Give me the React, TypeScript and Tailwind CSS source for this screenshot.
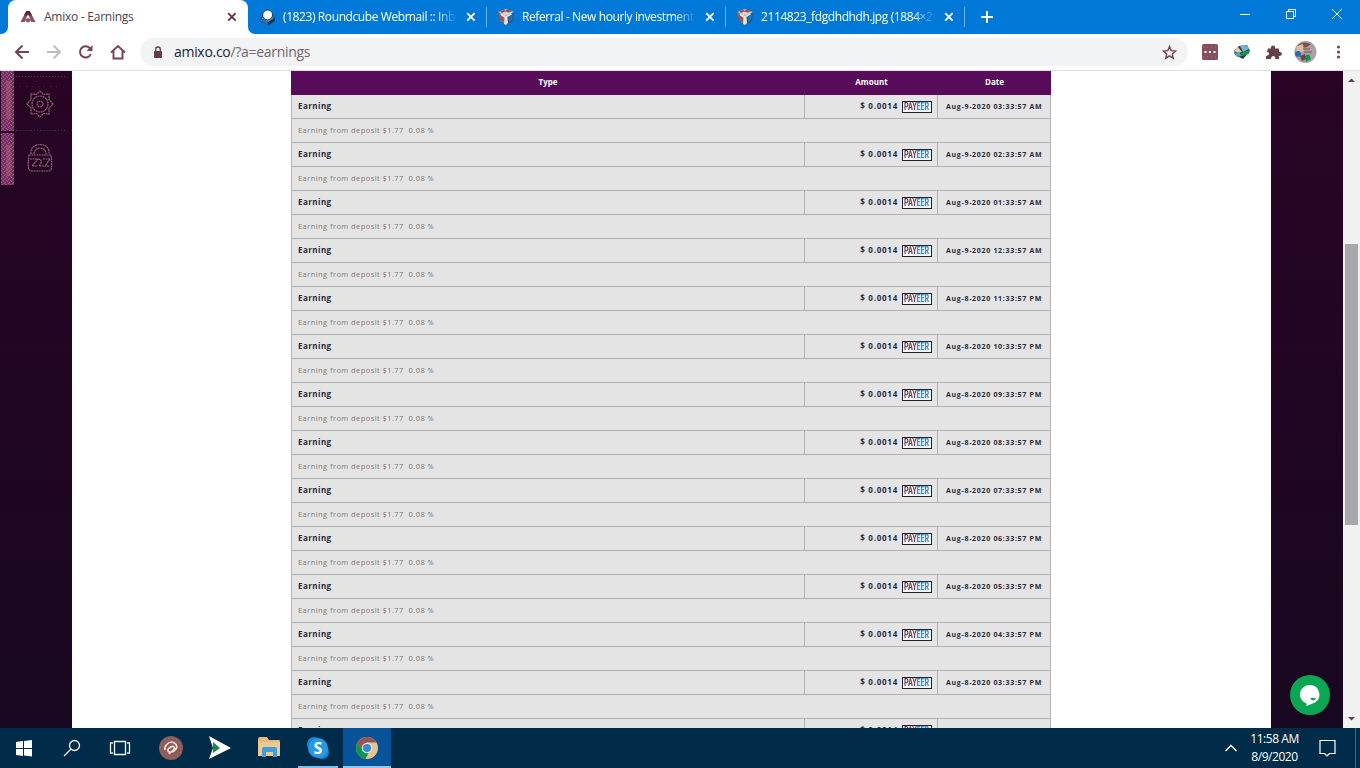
import { ReactNode } from "react";

const earnings = [
  "Aug-9-2020 03:33:57 AM",
  "Aug-9-2020 02:33:57 AM",
  "Aug-9-2020 01:33:57 AM",
  "Aug-9-2020 12:33:57 AM",
  "Aug-8-2020 11:33:57 PM",
  "Aug-8-2020 10:33:57 PM",
  "Aug-8-2020 09:33:57 PM",
  "Aug-8-2020 08:33:57 PM",
  "Aug-8-2020 07:33:57 PM",
  "Aug-8-2020 06:33:57 PM",
  "Aug-8-2020 05:33:57 PM",
  "Aug-8-2020 04:33:57 PM",
  "Aug-8-2020 03:33:57 PM",
  "Aug-8-2020 02:33:57 PM",
];

function CubeIcon() {
  return (
    <svg width="18" height="18" viewBox="0 0 18 18" className="shrink-0">
      <path d="M1 4 9 1l8 3-1 9-7 4-6-4z" fill="#27557f" />
      <path d="M1 4 9 1l8 3-8 4z" fill="#c9d3da" />
      <path d="M3 3.600 7 2l2 1-4 2zM10 1.500l5 1.700-3 1.400-4-1z" fill="#a5493e" />
      <path d="m1 4 8 4v9l-6-4z" fill="#75738a" />
      <path d="m2 6 5 3-1 4-3-1z" fill="#a84d42" />
      <path d="m4 5 5 3 5-3 1 1.500-4.500 2.500.5 6-2 2-2-1 .5-6-4-3z" fill="#e9dfd9" />
      <path d="m12 9 4-3-1 6-3 2z" fill="#1978bd" />
    </svg>
  );
}

function CloseIcon({ color }: { color: string }) {
  return (
    <svg width="10" height="10" viewBox="0 0 10 10" className="shrink-0">
      <path d="m1.2 1.2 7.4 7.4m0-7.4L1.2 8.6" stroke={color} strokeWidth="1.8" />
    </svg>
  );
}

function Tab({ icon, title, size }: { icon: ReactNode; title: string; size: string }) {
  return (
    <div className={`flex h-[34px] shrink-0 items-center text-white ${size}`}>
      {icon}
      <span className="ml-[7px] w-[174px] overflow-hidden whitespace-nowrap text-[12px] tracking-[-0.4px] [mask-image:linear-gradient(to_right,#000_88%,transparent)]">
        {title}
      </span>
      <span className="ml-auto mr-[10px]">
        <CloseIcon color="#fff" />
      </span>
      <span className="h-5 w-px bg-[#6bb4ee]" />
    </div>
  );
}

function TabStrip() {
  return (
    <div className="flex h-[34px] bg-[#0078d7]">
      <div className="flex w-2 bg-white">
        <div className="h-[34px] w-2 rounded-br-[7px] bg-[#0078d7]" />
      </div>
      <div className="flex w-[240px] items-center rounded-t-[8px] bg-white pl-3">
        <svg width="16" height="14" viewBox="0 0 16 14">
          <path d="M6.300 1h3.400L15.500 12h-4.300L8 6l-3.200 6H.5z" fill="#86505c" />
          <path d="M6.300 1h3.400L12 5.500H4z" fill="#5d2633" />
          <path d="m8 4.500-2.500 4.800h5z" fill="#fff" />
          <circle cx="8" cy="10.300" r="2.200" fill="#8f5863" />
        </svg>
        <span className="ml-2 text-[12px] tracking-[-0.25px] text-[#454450]">Amixo - Earnings</span>
        <span className="ml-auto mr-[11px]">
          <CloseIcon color="#60303d" />
        </span>
      </div>
      <div className="w-2 bg-white">
        <div className="h-[34px] w-2 rounded-bl-[7px] bg-[#0078d7]" />
      </div>
      <Tab
        size="w-[231px] pl-[3px]"
        title="(1823) Roundcube Webmail :: Inbox"
        icon={
          <svg width="17" height="17" viewBox="0 0 17 17" className="shrink-0">
            <path d="m1 9 7-4 8 4v3l-7 4.5L1 12z" fill="#173352" />
            <path d="m2 9 6-3 7 3-6 4z" fill="#4aa8e6" />
            <circle cx="8.500" cy="6" r="5" fill="#d7dee3" stroke="#25394d" />
            <circle cx="9" cy="5.500" r="3.800" fill="#fbfbfa" />
            <path d="m1 9 8 4v3.500L1 12z" fill="#2870ae" />
          </svg>
        }
      />
      <Tab size="w-[239px] pl-[10px]" title="Referral - New hourly investment" icon={<CubeIcon />} />
      <Tab size="w-[239px] pl-[10px]" title="2114823_fdgdhdhdh.jpg (1884×2000)" icon={<CubeIcon />} />
      <div className="flex items-center pl-4">
        <svg width="12" height="12" viewBox="0 0 12 12">
          <path d="M6 0v12M0 6h12" stroke="#fff" strokeWidth="2" />
        </svg>
      </div>
      <svg width="104" height="12" viewBox="0 0 104 12" className="mr-[17px] ml-auto mt-[8px]" fill="none" stroke="#fff">
        <path d="M1 6.500h10M47.500 3.500h7v7h-7zM49.500 3.500V1.500h7v7H54.500M93 1l10 10m0-10L93 11" />
      </svg>
    </div>
  );
}

function Toolbar() {
  return (
    <div className="flex h-[37px] items-center border-b border-[#dfdfe1] bg-white">
      <svg width="140" height="36" viewBox="0 0 140 36" fill="none" className="shrink-0">
        <path d="M29 18H16m6.500-6.500L16 18l6.500 6.500" stroke="#74444f" strokeWidth="2" />
        <path d="M47 18h13m-6.500-6.500L60 18l-6.500 6.500" stroke="#bdbcc0" strokeWidth="1.800" />
        <path d="M90.800 20a5.600 5.600 0 1 1-1-5.800" stroke="#74444f" strokeWidth="2" />
        <path d="M92.500 11v6h-6z" fill="#74444f" />
        <path d="M111 18.500 118 12l7 6.500M113.500 17v7.500h9V17" stroke="#74444f" strokeWidth="1.900" />
      </svg>
      <div className="flex h-7 w-[1048px] items-center rounded-full bg-[#f1f3f4] pl-[13px] pr-[11px]">
        <svg width="10" height="13" viewBox="0 0 10 13">
          <rect x="1" y="5" width="8" height="7" rx="1" fill="#693b46" />
          <path d="M2.700 5V3.300a2.300 2.300 0 0 1 4.600 0V5" stroke="#693b46" strokeWidth="1.300" fill="none" />
        </svg>
        <span className="ml-[11px] pb-px text-[14px] tracking-[-0.3px] text-[#24243a]">
          amixo.co<span className="text-[#75656f]">/?a=earnings</span>
        </span>
        <svg width="15" height="15" viewBox="0 0 15 15" className="ml-auto">
          <path d="m7.500 1.500 1.700 4.100 4.500.4-3.400 2.900 1 4.300-3.800-2.300-3.800 2.300 1-4.300L1.300 6l4.500-.4z" fill="none" stroke="#74444f" strokeWidth="1.400" />
        </svg>
      </div>
      <svg width="172" height="36" viewBox="0 0 172 36" className="shrink-0">
        <rect x="14" y="10" width="16" height="16" rx="1.500" fill="#86505a" />
        <path d="M16.500 17h2v2h-2zm4.500 0h2v2h-2zm4.500 0h2v2h-2z" fill="#fff" />
        <path d="M15 13h14M15 23h14" stroke="#a5717a" strokeDasharray="1 3" />
        <path d="m46 17 5-5 8-1 3 6-7 8-8-4z" fill="#253b38" />
        <path d="M52 12q7-3 9 3l-6 3z" fill="#75b3d2" />
        <path d="m46 17 4-4 4 5-4 1z" fill="#dbd0ae" />
        <path d="m46 19 5-1 3 4-5 1z" fill="#5f9cbc" />
        <path d="m53 19 8-3v4l-7 2z" fill="#139b52" />
        <path d="M80 14.500h3c-1-4 5-4 4 0h4v3.500c4-.5 4 4 0 4v3h-4c1-4-4-4-4 0h-5v-3c4-.5 4-4 1-4z" fill="#684048" />
        <circle cx="117.500" cy="18" r="11" fill="#aaa0a5" />
        <path d="M109 12q6-6 14-2l-4 3-9 2z" fill="#80514d" />
        <path d="m109 12 6-2 1 7-8 3z" fill="#dbbda0" />
        <circle cx="110" cy="20" r="3" fill="#286eae" />
        <path d="m117 22 4-2 2 5-5 3z" fill="#0b974c" />
        <path d="m112 22 5-2 1 5-4 2z" fill="#70414c" />
        <path d="M115 15h7m-6 3h8" stroke="#76505a" />
        <g fill="#74444f">
          <circle cx="150.500" cy="13" r="1.600" />
          <circle cx="150.500" cy="18" r="1.600" />
          <circle cx="150.500" cy="23" r="1.600" />
        </g>
      </svg>
    </div>
  );
}

function Sidebar() {
  return (
    <aside className="flex w-[72px] bg-linear-to-b from-[#290424] to-[#180720]">
      <svg width="72" height="116" viewBox="0 0 72 116" fill="none">
        <defs>
          <pattern id="grain" width="4" height="4" patternUnits="userSpaceOnUse">
            <rect width="4" height="4" fill="#743064" />
            <path d="M0 0h1v1H0zm2 1h1v1H2zM1 3h1v1H1zm2-1h1v1H3z" fill="#a25b8a" />
          </pattern>
        </defs>
        <path d="M1 0h13v60H1zm0 62h13v52H1z" fill="url(#grain)" />
        <path d="M6 10h5v38H6zm0 64h5v31H6z" fill="#a46266" opacity=".5" />
        <path d="M16 5.500h50M16 59.500h50" stroke="#5c3153" strokeDasharray="1 2" />
        <path d="M20 15.500h42" stroke="#4b213f" strokeDasharray="1 5" />
        <g stroke="#936077" strokeWidth="1.200" strokeDasharray="2 .5">
          <path d="m40 20 3.500 3.500 5.500-.5v5.500l4 4.500-4 4v6l-5.500-.5L40 46l-3.500-3.500L31 43v-6l-4-4 4-4.500V23l5.500.5z" />
          <circle cx="40" cy="33" r="8" />
          <circle cx="40" cy="33" r="3" />
          <path d="M31 83v-2c0-10 18-10 18 0v2M34 83c0-8 12-8 12 0M29 84h22q1 8 .5 13-.5 3-3.500 3H32q-3 0-3.500-3-.5-5 .5-13z" />
          <path d="M30 88h8l-6 7h5m1-7q6 1 1 7h5m-1-7h7l-5 7h5" />
        </g>
      </svg>
    </aside>
  );
}

function Payeer() {
  return (
    <span className="mt-[3px] ml-[4px] flex h-[12px] w-[30px] items-center justify-center overflow-hidden border border-[#27202b] bg-[#f5f5f7]">
      <span className="scale-x-[0.72] font-['Roboto'] text-[10px] leading-[10px] font-extrabold tracking-[-0.1px] text-[#794858]">
        PAY<span className="text-[#3192d2]">EER</span>
      </span>
    </span>
  );
}

function EarningsTable() {
  return (
    <div className="w-[760px] text-[8px] leading-none">
      <div className="grid h-6 grid-cols-[514px_133px_113px] items-center bg-[#570b59] pb-[2px] text-center font-bold text-white">
        <span>Type</span>
        <span>Amount</span>
        <span>Date</span>
      </div>
      <div className="border-x border-[#b5b2b3] bg-[#e4e4e4]">
        {earnings.map((date, i) => (
          <div key={date}>
            <div className="grid h-6 grid-cols-[512px_134px_112px] border-b border-[#b5b0b1] font-bold text-[#29293f]">
              <div className="flex items-center pb-[2px] pl-[6px] tracking-[0.45px]">Earning</div>
              <div className="flex items-center justify-end border-x border-[#b5b0b1] pr-[5px] pb-[2px] tracking-[0.75px]">
                $ 0.0014
                <Payeer />
              </div>
              <div className="flex items-center pb-px pl-[8px] text-[7px] tracking-[0.7px] whitespace-nowrap">{date}</div>
            </div>
            {i < earnings.length - 1 && (
              <div className="flex h-6 items-center border-b border-[#b5b0b1] pl-[6px] text-[7.5px] tracking-[0.43px] whitespace-pre text-[#817775]">
                {"Earning from deposit $1.77  0.08 %"}
              </div>
            )}
          </div>
        ))}
      </div>
    </div>
  );
}

function Taskbar() {
  return (
    <footer className="flex h-10 bg-[#002b49] text-white">
      <svg width="391" height="40" viewBox="0 0 391 40">
        <path d="m16 14 7-1v7h-7zm8-1 8-1v8h-8zM16 21h7v7l-7-1zm8 0h8v7.500l-8-1z" fill="#fff" />
        <g fill="none" stroke="#edf3f7" strokeWidth="1.300">
          <circle cx="74.500" cy="17.500" r="5" />
          <path d="m71 21-7 7" />
          <path d="M114.500 13.500h11v13h-11zM113 15h-2.500v10h2.500m14-10h2.500v10h-2.500" />
        </g>
        <circle cx="171" cy="20" r="12" fill="#8c5c5d" />
        <circle cx="171" cy="20" r="10" fill="none" stroke="#b2827a" strokeDasharray="1 3" />
        <path d="M165 22c-1-4 3-8 7-8 4 1 6 4 4 7s-7 4-8 2 4-6 6-4-3 5-5 7" fill="none" stroke="#f0ddcf" strokeWidth="1.700" />
        <path d="m209 8 22 12-22 11 4-11z" fill="#fff" />
        <path d="m213 14 7 6-7 5z" fill="#258443" />
        <path d="M258 11q0-2 2-2h7l2 3h10q1 0 1 2v14h-22z" fill="#dfbd83" />
        <path d="M258 14h22v14h-22z" fill="#eccb91" />
        <path d="M262 29v-8q0-2 2-2h11q2 0 2 2v8h-4v-5h-7v5z" fill="#429cdc" />
        <circle cx="314" cy="16" r="7" fill="#1387d8" />
        <circle cx="322" cy="24" r="7" fill="#1387d8" />
        <circle cx="318" cy="20" r="10" fill="#2998e3" />
        <text x="318" y="26" textAnchor="middle" fill="#fff" fontFamily="Open Sans, sans-serif" fontWeight="700" fontSize="16">S</text>
        <path d="M298 38h40v2h-40z" fill="#82bce8" />
        <path d="M343 0h48v40h-48z" fill="#07539a" />
        <path d="M343 38h48v2h-48z" fill="#91c8ee" />
        <circle cx="367" cy="20" r="11" fill="#e9c38d" />
        <path d="M357.500 14.500a11 11 0 0 1 19 0H367l-5 8z" fill="#985451" />
        <path d="m357.500 14.500 5 8 6 2.500-3 6a11 11 0 0 1-8-16.500" fill="#109451" />
        <circle cx="367" cy="20" r="5.200" fill="#e7edf0" />
        <circle cx="367" cy="20" r="4.100" fill="#368bd3" />
      </svg>
      <svg width="12" height="40" viewBox="0 0 12 40" className="mr-[13px] ml-auto">
        <path d="m.5 23 5.500-5.500 5.500 5.500" fill="none" stroke="#fff" strokeWidth="1.300" />
      </svg>
      <div className="w-[49px] pt-[2px] text-center text-[12px] leading-[18px] tracking-[-0.45px] whitespace-nowrap">
        <div>11:58 AM</div>
        <div>8/9/2020</div>
      </div>
      <svg width="17" height="40" viewBox="0 0 17 40" className="mr-[19px] ml-[20px]">
        <path d="M1 12.500h15v13h-5.500L8 28l-2.500-2.500H1z" fill="none" stroke="#fff" strokeWidth="1.200" />
      </svg>
      <span className="mr-[4px] w-px bg-[#596273]" />
    </footer>
  );
}

export default function App() {
  return (
    <div className="flex h-[768px] w-[1360px] flex-col overflow-hidden bg-white font-['Open_Sans','Noto_Sans',sans-serif]">
      <TabStrip />
      <Toolbar />
      <main className="flex h-[657px] overflow-hidden">
        <Sidebar />
        <div className="flex w-[1199px] justify-center bg-white pr-px">
          <EarningsTable />
        </div>
        <div className="flex w-[72px] items-end justify-center bg-linear-to-b from-[#290424] to-[#180720] pb-[13px] pl-[6px]">
          <div className="flex size-10 items-center justify-center rounded-full bg-[#0aa653]">
            <svg width="22" height="22" viewBox="0 0 22 22">
              <path d="M11 1a9.500 9.500 0 0 1 5 17.500L7.500 22v-2.500A9.500 9.500 0 0 1 11 1" fill="#fff" />
              <path d="M11 14h6q-2.500 5-6 0" fill="#0aa653" />
            </svg>
          </div>
        </div>
        <div className="flex w-[17px] flex-col items-center bg-[#f1f1f2]">
          <svg width="9" height="173" viewBox="0 0 9 173">
            <path d="M1 11 4.500 7.500 8 11z" fill="#65404a" />
          </svg>
          <div className="h-[281px] w-[13px] bg-[#a8a7ac]" />
          <svg width="9" height="203" viewBox="0 0 9 203">
            <path d="M1 192h7l-3.500 3.500z" fill="#65404a" />
          </svg>
        </div>
      </main>
      <Taskbar />
    </div>
  );
}
